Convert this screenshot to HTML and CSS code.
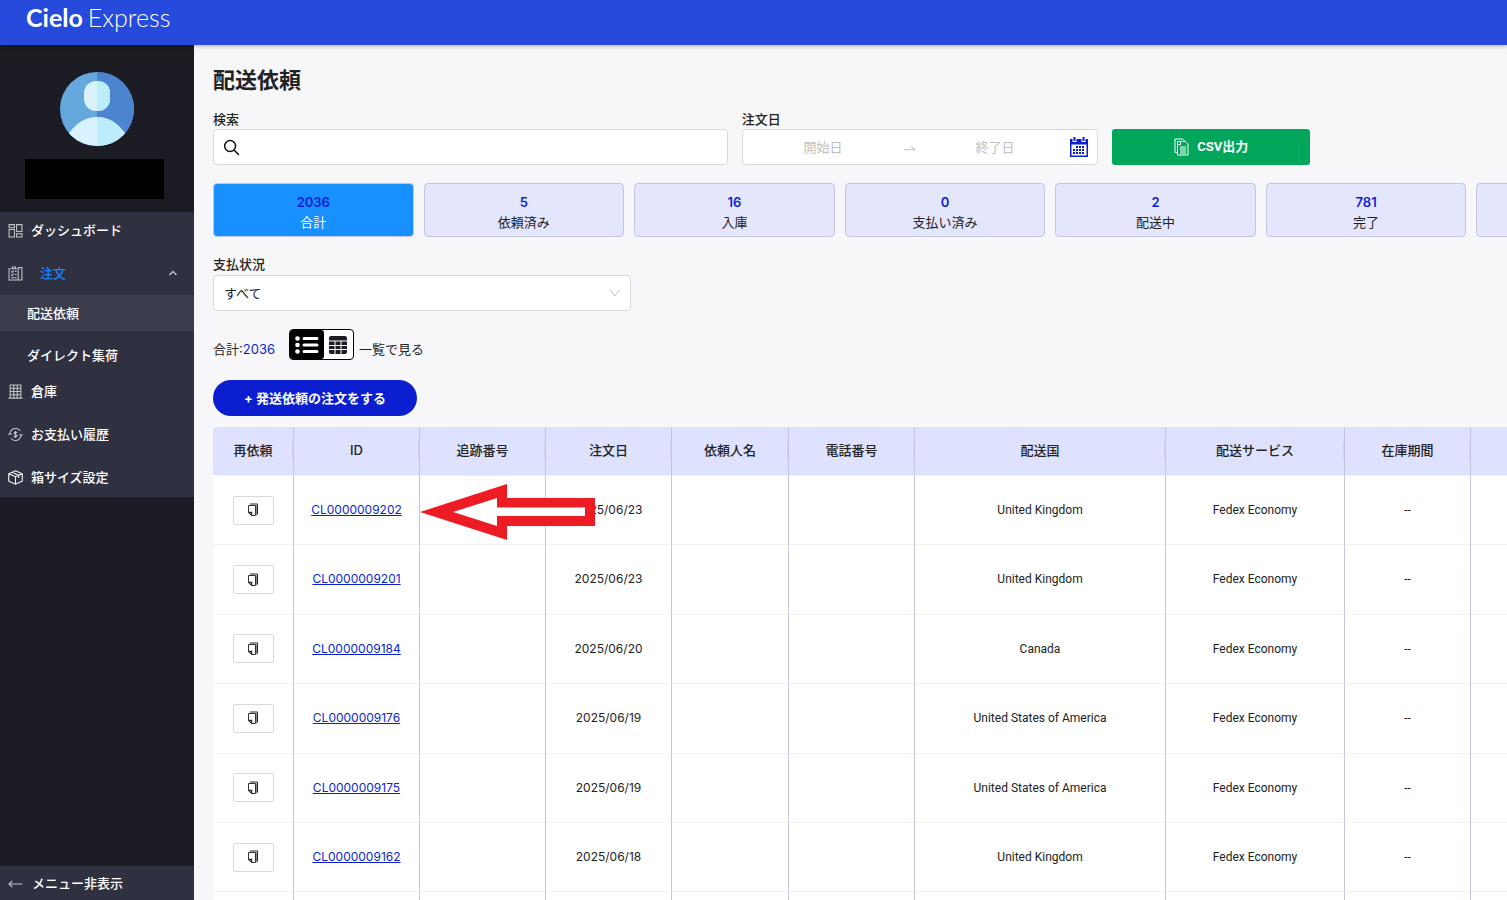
FILE: index.html
```html
<!DOCTYPE html>
<html lang="ja">
  <head>
    <meta charset="UTF-8" />
    <meta name="viewport" content="width=device-width, initial-scale=1.0" />
    <title>配送依頼 | Cielo Express</title>
    <link rel="stylesheet" href="styles.css">
  </head>
  <body>
    <!-- Shared icon for the copy buttons -->
    <svg class="sprite" width="0" height="0" aria-hidden="true">
      <symbol id="icon-copy" viewBox="0 0 12 14">
        <path d="M3 1H10.500V11.500" fill="none" stroke="#222" />
        <path d="M1.500 2.500H8.500V12.500H4.500L1.500 9.500Z" fill="#fff" stroke="#333" />
        <path d="M1.500 9.500H4.500V12.500" fill="none" stroke="#222" stroke-width="1.400" />
        <path d="M9.500 2.500V12.500" stroke="#888" />
      </symbol>
    </svg>

    <header class="topbar">
      <a class="logo" href="#"><b>Cielo</b><span>Express</span></a>
    </header>

    <div class="layout">
      <aside class="sidebar">
        <div class="profile">
          <svg class="avatar" viewBox="0 0 74 74" aria-hidden="true">
            <defs>
              <clipPath id="round"><circle cx="37" cy="37" r="37" /></clipPath>
              <clipPath id="right-half"><path d="M37 0h37v74H37z" /></clipPath>
            </defs>
            <g clip-path="url(#round)">
              <path fill="#65a8de" d="M0 0h74v74H0z" />
              <path fill="#4c84cf" d="M37 0h37v74H37z" />
              <rect x="24" y="9" width="26" height="30" rx="12" fill="#d8f2fe" />
              <path fill="#d8f2fe" d="M5 67C15 51 25 45 37 45s22 6 32 22v7H5z" />
              <g clip-path="url(#right-half)" fill="#bdecfd">
                <rect x="24" y="9" width="26" height="30" rx="12" />
                <path d="M5 67C15 51 25 45 37 45s22 6 32 22v7H5z" />
              </g>
            </g>
          </svg>
          <div class="username"></div>
        </div>

        <nav class="menu">
          <a class="item" href="#">
            <svg class="icon" viewBox="0 0 14 14"><path d="M1 1.500h5v3H1zM1 6h5v7H1zM8 1.500h5v6.500H8zM8 10h5v3H8z" /></svg>
            ダッシュボード
          </a>
          <a class="item open" href="#">
            <svg class="icon" viewBox="0 0 14 14"><path d="M2.500 2.500H1v10.500h12V1.500H9.500V13M3 2.500h5.500M4 2.500V1h3v1.500M3 5l1 1 1.500-2M6.500 5h1.500M3 8l1 1 1.500-2M6.500 8h1.500M3 11h5" /></svg>
            <span>注文</span>
            <svg class="chevron" viewBox="0 0 10 10"><path d="M1.500 7L5 3.500 8.500 7" /></svg>
          </a>
          <a class="subitem active" href="#">配送依頼</a>
          <a class="subitem" href="#">ダイレクト集荷</a>
          <a class="item" href="#">
            <svg class="icon" viewBox="0 0 14 14"><path d="M2 13V1h10v12M.5 13.200h13M2 4h10M2 7h10M2 10h10M5.300 1v9M8.700 1v9M5.500 13v-3h3v3" /></svg>
            倉庫
          </a>
          <a class="item" href="#">
            <svg class="icon" viewBox="0 0 14 14"><path d="M2 5A5.500 5.500 0 0 1 11.500 3.500M12 9A5.500 5.500 0 0 1 2.500 10.500M.5 7.500L1.800 5.500 3.300 7.500M10.700 6.500L12.200 8.500 13.500 6.500M8.700 5.300C7.500 4.200 5.500 4.700 5.600 5.900 5.700 7.300 8.600 6.700 8.600 8.200 8.500 9.400 6.500 9.700 5.300 8.600M7 3.800v6.500" /></svg>
            お支払い履歴
          </a>
          <a class="item" href="#">
            <svg class="icon bright" viewBox="0 0 14 14"><path d="M7 .7L13.300 3.500v7L7 13.300.7 10.500v-7zM.7 3.500L7 6.300l6.300-2.800M7 6.300v7M3.700 2.200L10 5v2.500" /></svg>
            箱サイズ設定
          </a>
        </nav>

        <button type="button" class="collapse">
          <svg class="icon" viewBox="0 0 14 14"><path d="M13.500 7.500H1M4 4.500L1 7.500l3 3" /></svg>
          メニュー非表示
        </button>
      </aside>

      <main class="content">
        <h1>配送依頼</h1>

        <form class="filters" onsubmit="return false">
          <div class="field">
            <label for="search">検索</label>
            <div class="control">
              <svg class="search-icon" viewBox="0 0 18 18"><circle cx="7.500" cy="7.500" r="5.800" /><path d="M11.600 11.600L16.800 16.800" /></svg>
              <input type="text" id="search" />
            </div>
          </div>
          <div class="field">
            <label for="from">注文日</label>
            <div class="control">
              <input type="text" id="from" class="date" placeholder="開始日" />
              <svg class="range-arrow" viewBox="0 0 12 12"><path d="M1 8h10L7.500 5" /></svg>
              <input type="text" class="date" placeholder="終了日" aria-label="終了日" />
              <svg class="calendar" viewBox="0 0 18 20">
                <path fill="#0b1fd1" d="M0 2h18v18H0z" />
                <path fill="#fff" d="M1.500 7.500h15v11h-15z" />
                <path stroke="#fff" stroke-width="4" d="M4.500 0v5M13.500 0v5" />
                <path stroke="#0b1fd1" stroke-width="2" d="M4.500 0v4M13.500 0v4" />
                <path stroke="#0b1fd1" stroke-width="2" stroke-dasharray="2 1" d="M6 10h9M3 13h12M3 16h12" />
              </svg>
            </div>
          </div>
          <button type="button" class="csv">
            <svg class="csv-icon" viewBox="0 0 15 18"><path d="M3 14.500H1V1h7.500l2 2M3.500 3.500h8l2.500 2.500v11H3.500zM6 9h6M6 11h6M6 13h6M6 15h6M4 6.500h2.500V4" /></svg>
            CSV出力
          </button>
        </form>

        <div class="stats">
          <button type="button" class="stat selected"><b>2036</b><span>合計</span></button>
          <button type="button" class="stat"><b>5</b><span>依頼済み</span></button>
          <button type="button" class="stat"><b>16</b><span>入庫</span></button>
          <button type="button" class="stat"><b>0</b><span>支払い済み</span></button>
          <button type="button" class="stat"><b>2</b><span>配送中</span></button>
          <button type="button" class="stat"><b>781</b><span>完了</span></button>
          <button type="button" class="stat" aria-label="その他"></button>
        </div>

        <div class="field payment">
          <label for="payment">支払状況</label>
          <div class="control">
            <select id="payment"><option>すべて</option></select>
            <svg class="caret" viewBox="0 0 12 12"><path d="M1.500 3L6 9l4.500-6" /></svg>
          </div>
        </div>

        <div class="view">
          <p class="total">合計:<b>2036</b></p>
          <div class="toggle">
            <button type="button" class="on" aria-label="リスト">
              <svg width="24" height="20" viewBox="0 0 24 20">
                <g fill="#fff"><circle cx="2.500" cy="3.500" r="2.300" /><circle cx="2.500" cy="10" r="2.300" /><circle cx="2.500" cy="16.500" r="2.300" /></g>
                <path stroke="#fff" stroke-width="3" stroke-linecap="round" d="M9 3.500h13M9 10h13M9 16.500h13" />
              </svg>
            </button>
            <button type="button" aria-label="表">
              <svg width="18" height="18" viewBox="0 0 18 18">
                <rect width="18" height="18" rx="2" fill="#1d1c24" />
                <path stroke="#fff" d="M0 5h18M0 9.500h18M0 13.500h18M6 5v13M12 5v13" />
              </svg>
            </button>
          </div>
          <p>一覧で見る</p>
        </div>

        <button type="button" class="create">+ 発送依頼の注文をする</button>

        <div class="table-wrap">
          <table>
            <colgroup>
              <col class="w-copy" /><col class="w-base" /><col class="w-base" /><col class="w-base" /><col class="w-name" />
              <col class="w-base" /><col class="w-country" /><col class="w-service" /><col class="w-base" /><col class="w-base" />
            </colgroup>
            <thead>
              <tr>
                <th>再依頼</th><th>ID</th><th>追跡番号</th><th>注文日</th><th>依頼人名</th>
                <th>電話番号</th><th>配送国</th><th>配送サービス</th><th>在庫期間</th><th></th>
              </tr>
            </thead>
            <tbody>
              <tr>
                <td class="action"><button type="button" class="copy" aria-label="再依頼"><svg><use href="#icon-copy" /></svg></button></td>
                <td class="num"><a href="#">CL0000009202</a></td>
                <td class="marked">
                  <svg class="pointer" viewBox="0 0 175 56" aria-hidden="true">
                    <path fill="#ed1c24" d="M0 28L87 0v14h88v28H87v14z" />
                    <path fill="#fff" d="M33 28L77 14v9.500h88v8.500H77v10z" />
                  </svg>
                </td>
                <td class="num">2025/06/23</td><td></td><td></td><td>United Kingdom</td><td>Fedex Economy</td><td>--</td><td></td>
              </tr>
              <tr>
                <td class="action"><button type="button" class="copy" aria-label="再依頼"><svg><use href="#icon-copy" /></svg></button></td>
                <td class="num"><a href="#">CL0000009201</a></td><td></td>
                <td class="num">2025/06/23</td><td></td><td></td><td>United Kingdom</td><td>Fedex Economy</td><td>--</td><td></td>
              </tr>
              <tr>
                <td class="action"><button type="button" class="copy" aria-label="再依頼"><svg><use href="#icon-copy" /></svg></button></td>
                <td class="num"><a href="#">CL0000009184</a></td><td></td>
                <td class="num">2025/06/20</td><td></td><td></td><td>Canada</td><td>Fedex Economy</td><td>--</td><td></td>
              </tr>
              <tr>
                <td class="action"><button type="button" class="copy" aria-label="再依頼"><svg><use href="#icon-copy" /></svg></button></td>
                <td class="num"><a href="#">CL0000009176</a></td><td></td>
                <td class="num">2025/06/19</td><td></td><td></td><td>United States of America</td><td>Fedex Economy</td><td>--</td><td></td>
              </tr>
              <tr>
                <td class="action"><button type="button" class="copy" aria-label="再依頼"><svg><use href="#icon-copy" /></svg></button></td>
                <td class="num"><a href="#">CL0000009175</a></td><td></td>
                <td class="num">2025/06/19</td><td></td><td></td><td>United States of America</td><td>Fedex Economy</td><td>--</td><td></td>
              </tr>
              <tr>
                <td class="action"><button type="button" class="copy" aria-label="再依頼"><svg><use href="#icon-copy" /></svg></button></td>
                <td class="num"><a href="#">CL0000009162</a></td><td></td>
                <td class="num">2025/06/18</td><td></td><td></td><td>United Kingdom</td><td>Fedex Economy</td><td>--</td><td></td>
              </tr>
              <tr class="blank">
                <td></td><td></td><td></td><td></td><td></td><td></td><td></td><td></td><td></td><td></td>
              </tr>
            </tbody>
          </table>
        </div>
      </main>
    </div>
  </body>
</html>
```

FILE: styles.css
```css
* {
  box-sizing: border-box;
}

body {
  display: flex;
  flex-direction: column;
  height: 100vh;
  margin: 0;
  overflow: hidden;
  background-color: #f7f7f9;
  color: #222;
  font-family: Inter, "Noto Sans CJK JP", sans-serif;
  font-size: 13px;
  line-height: 20px;
}

button,
input,
select {
  font: inherit;
  color: inherit;
}

button {
  padding: 0;
  cursor: pointer;
}

p {
  margin: 0;
}

.sprite {
  position: absolute;
}

/* Top bar */
.topbar {
  flex: none;
  height: 45px;
  padding: 3px 26px;
  background-color: #264adc;
  box-shadow: 0 1px 4px rgba(0, 0, 0, 0.3);
  z-index: 1;
}

.logo {
  display: flex;
  gap: 5px;
  color: #fff;
  font-family: Lato, sans-serif;
  font-size: 25px;
  line-height: 28px;
  text-decoration: none;
}

.logo span {
  font-weight: 300;
}

.layout {
  display: flex;
  flex: 1;
  min-height: 0;
}

/* Sidebar */
.sidebar {
  display: flex;
  flex: none;
  flex-direction: column;
  width: 194px;
  background-color: #1c1c24;
}

.profile {
  display: flex;
  flex-direction: column;
  align-items: center;
  gap: 13px;
  padding: 27px 30px 13px 25px;
}

.avatar {
  width: 74px;
  height: 74px;
  margin-left: 5px;
}

.username {
  align-self: stretch;
  height: 40px;
  background-color: #000;
}

.menu {
  display: flex;
  flex-direction: column;
  padding-bottom: 2px;
  background-color: #2f3140;
}

.item,
.subitem {
  display: flex;
  align-items: center;
  height: 36px;
  color: #fff;
  font-weight: 500;
  text-decoration: none;
}

.item {
  gap: 8px;
  margin-bottom: 7px;
  padding: 0 16px 0 8px;
}

.item:last-child {
  margin-bottom: 0;
}

.item.open {
  gap: 17px;
  margin-bottom: 4px;
  color: #1c80ff;
}

.subitem {
  margin-bottom: 6px;
  padding-left: 27px;
}

.subitem + .subitem {
  margin-bottom: 0;
}

.subitem.active {
  background-color: #3b3d4d;
}

.icon {
  flex: none;
  width: 15px;
  height: 15px;
  fill: none;
  stroke: #c4c5ca;
}

.icon.bright {
  stroke: #fff;
}

.chevron {
  width: 10px;
  height: 10px;
  margin-left: auto;
  fill: none;
  stroke: #c4c5ca;
  stroke-width: 1.4;
}

.collapse {
  display: flex;
  align-items: center;
  gap: 9px;
  height: 34px;
  margin-top: auto;
  padding-left: 8px;
  border: none;
  background-color: #2f3140;
  color: #fff;
  font-weight: 500;
}

/* Main area */
.content {
  flex: 1;
  min-width: 0;
  padding: 19px 0 0 19px;
  overflow: hidden;
}

h1 {
  margin: 0 0 13px;
  font-size: 22px;
  font-weight: 700;
  line-height: 32px;
}

.filters {
  display: grid;
  grid-template-columns: 515fr 357fr 198fr;
  gap: 14px;
  align-items: end;
  width: 84.8%;
}

.field {
  min-width: 0;
}

label {
  display: block;
  font-weight: 500;
}

.control {
  display: flex;
  align-items: center;
  height: 36px;
  padding: 0 9px;
  border: 1px solid #d9d9d9;
  border-radius: 4px;
  background-color: #fff;
}

.control input {
  flex: 1;
  min-width: 0;
  border: none;
  outline: none;
  background: none;
}

.control .date {
  text-align: center;
}

.date::placeholder {
  color: #bfbfbf;
}

.search-icon {
  width: 17px;
  height: 17px;
  fill: none;
  stroke: #111;
  stroke-width: 1.6;
}

.range-arrow {
  width: 13px;
  height: 13px;
  margin: 0 8px;
  fill: none;
  stroke: #bfbfbf;
}

.calendar {
  width: 18px;
  height: 20px;
  margin-left: 4px;
}

.csv {
  display: flex;
  align-items: center;
  justify-content: center;
  gap: 8px;
  height: 36px;
  border: none;
  border-radius: 3px;
  background-color: #00a75a;
  color: #fff;
  font-family: Roboto, "Noto Sans CJK JP", sans-serif;
  font-weight: 700;
}

.csv-icon {
  width: 15px;
  height: 18px;
  fill: none;
  stroke: #fff;
}

/* Status counters */
.stats {
  display: flex;
  gap: 10px;
  margin: 18px 0 17px;
}

.stat {
  display: flex;
  flex: 0 0 15.5%;
  flex-direction: column;
  align-items: center;
  justify-content: center;
  height: 54px;
  padding-top: 3px;
  border: 1px solid #c3c5e2;
  border-radius: 4px;
  background-color: #e4e6fe;
}

.stat b {
  color: #0b1fd1;
  font-weight: 600;
}

.stat.selected {
  background-color: #1890ff;
  color: #fff;
}

.payment {
  width: 418px;
}

.payment label {
  margin-bottom: 1px;
}

.payment .control {
  position: relative;
  padding: 0;
}

.payment select {
  width: 100%;
  height: 100%;
  padding: 0 10px;
  border: none;
  outline: none;
  background: none;
  appearance: none;
}

.caret {
  position: absolute;
  right: 9px;
  width: 12px;
  height: 12px;
  fill: none;
  stroke: #bfbfbf;
  pointer-events: none;
}

/* List / grid switch */
.view {
  display: flex;
  align-items: flex-end;
  margin: 18px 0 20px;
}

.view p {
  padding-bottom: 1px;
}

.total b {
  color: #0b1fd1;
  font-weight: 400;
}

.toggle {
  display: flex;
  width: 65px;
  height: 31px;
  margin: 0 5px 0 14px;
  overflow: hidden;
  border: 1px solid #000;
  border-radius: 4px;
  background-color: #fff;
}

.toggle button {
  display: flex;
  flex: 1;
  align-items: center;
  justify-content: center;
  border: none;
  background: none;
}

.toggle .on {
  flex: 0 0 34px;
  border-radius: 0 3px 3px 0;
  background-color: #000;
}

.create {
  display: block;
  height: 36px;
  margin-bottom: 11px;
  padding: 0 31px;
  border: none;
  border-radius: 18px;
  background-color: #0b1fd1;
  color: #fff;
  font-weight: 700;
}

/* Orders table */
.table-wrap {
  overflow: hidden;
  border-radius: 3px 0 0 0;
}

table {
  width: 1384px;
  table-layout: fixed;
  border-spacing: 0;
  background-color: #fff;
  text-align: center;
}

.w-copy {
  width: 81px;
}

.w-base {
  width: 126px;
}

.w-name {
  width: 117px;
}

.w-country {
  width: 251px;
}

.w-service {
  width: 179px;
}

th,
td {
  padding: 24px 8px;
  border-right: 1px solid #c4c3e0;
  border-bottom: 1px solid #f0f0f0;
}

th {
  height: 49px;
  padding: 0 8px 2px;
  background: linear-gradient(#d3d4ef, #d3d4ef) right center / 1px 20px no-repeat #dfe2ff;
  font-weight: 500;
}

td {
  font-family: Roboto, "Noto Sans CJK JP", sans-serif;
  font-size: 12px;
  line-height: 1.7;
}

.num {
  font-family: Inter, sans-serif;
}

td a {
  color: #0b1fd1;
  text-decoration: underline;
}

.action {
  padding: 0;
}

.copy {
  display: inline-flex;
  align-items: center;
  justify-content: center;
  width: 41px;
  height: 29px;
  border: 1px solid #d9d9d9;
  border-radius: 2px;
  background-color: #fff;
  vertical-align: middle;
}

.copy svg {
  width: 12px;
  height: 14px;
}

.marked {
  position: relative;
}

.pointer {
  position: absolute;
  top: 8px;
  left: 0;
  width: 175px;
  height: 56px;
}

.blank td {
  height: 69px;
}
```
